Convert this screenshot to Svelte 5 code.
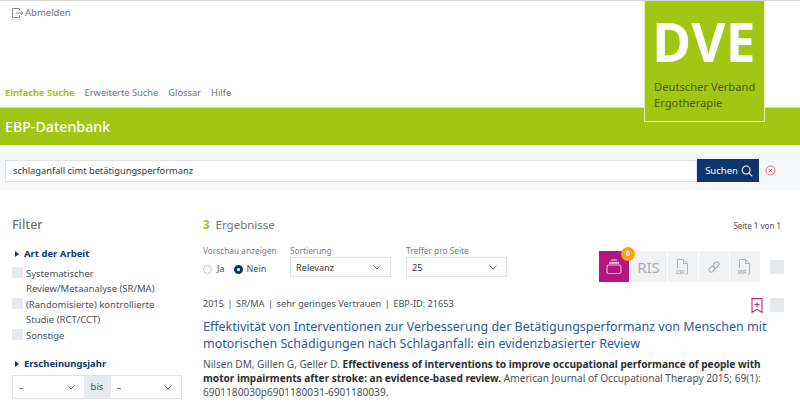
<script>
	const filters = [
		{ lines: ["Systematischer", "Review/Metaanalyse (SR/MA)"] },
		{ lines: ["(Randomisierte) kontrollierte", "Studie (RCT/CCT)"] },
		{ lines: ["Sonstige"] },
	];
	const nav = ["Erweiterte Suche", "Glossar", "Hilfe"];
	const meta = ["2015", "SR/MA", "sehr geringes Vertrauen", "EBP-ID: 21653"];
</script>

{#snippet chevron()}
	<svg class="chev" width="8" height="5" viewBox="0 0 8 5"><path d="M.5.5L4 4 7.5.5" fill="none" stroke="#5a6068" stroke-width="0.9"/></svg>
{/snippet}

{#snippet doc(label)}
	<svg width="15" height="16" viewBox="0 0 15 16" fill="none" stroke="#a9aeb5" stroke-width="0.9">
		<path d="M1.500 9V.5h6l4 4v9.500q0 1.500-1.500 1.500M7.500.5v4h4"/>
		<text x="0" y="14.500" font-size="4.500" font-weight="700" fill="#a9aeb5" stroke="none">{label}</text>
	</svg>
{/snippet}

<div class="page">
	<header>
		<a class="logout">
			<svg width="12" height="10" viewBox="0 0 12 10" fill="none" stroke="#8a8f96"><path d="M7.500 2.500V.5h-7v9h7v-2M4 5h7M9 3l2 2-2 2"/></svg>
			Abmelden
		</a>
		<nav>
			<b>Einfache Suche</b>
			{#each nav as item}<span>{item}</span>{/each}
		</nav>
		<div class="logo">
			<div class="dve">DVE</div>
			<div class="claim">Deutscher Verband<br />Ergotherapie</div>
		</div>
	</header>

	<div class="band"><h1>EBP-Datenbank</h1></div>

	<div class="search">
		<div class="field">schlaganfall cimt betätigungsperformanz</div>
		<button class="go">
			Suchen
			<svg width="12" height="12" viewBox="0 0 13 13" fill="none" stroke="#fff" stroke-width="1.1"><circle cx="5.500" cy="5.500" r="4.300"/><path d="M8.700 8.700l3.600 3.600"/></svg>
		</button>
		<svg class="clear" width="11" height="11" viewBox="0 0 12 12" fill="none" stroke="#e8606f"><circle cx="6" cy="6" r="5"/><path d="M4 4l4 4M8 4l-4 4"/></svg>
	</div>

	<div class="main">
		<aside>
			<h2>Filter</h2>
			<h3><i></i>Art der Arbeit</h3>
			{#each filters as f}
				<div class="check">
					<span class="box"></span>
					<div>{#each f.lines as l}<div>{l}</div>{/each}</div>
				</div>
			{/each}
			<h3 class="year"><i></i>Erscheinungsjahr</h3>
			<div class="range">
				<div class="cell">–{@render chevron()}</div>
				<div class="bis">bis</div>
				<div class="cell">–{@render chevron()}</div>
			</div>
		</aside>

		<section>
			<div class="head">
				<div class="count"><b>3</b>Ergebnisse</div>
				<div class="pages">Seite 1 von 1</div>
			</div>

			<div class="tools">
				<div class="opt preview">
					<label>Vorschau anzeigen</label>
					<div class="radios">
						<span class="radio"></span>Ja
						<span class="radio on"></span>Nein
					</div>
				</div>
				<div class="opt sort">
					<label>Sortierung</label>
					<div class="select">Relevanz{@render chevron()}</div>
				</div>
				<div class="opt hits">
					<label>Treffer pro Seite</label>
					<div class="select">25{@render chevron()}</div>
				</div>
				<div class="actions">
					<div class="act pink">
						<span class="badge">0</span>
						<svg width="16" height="15" viewBox="0 0 16 15" fill="none" stroke="#f0bcd9" stroke-width="1.100"><rect x="1" y="6" width="14" height="8.500" rx="1.800"/><path d="M3 3.800h10" stroke-width="2"/><path d="M5 1h6" stroke-width="1.200"/></svg>
					</div>
					<div class="act ris">RIS</div>
					<div class="act">{@render doc("CSV")}</div>
					<div class="act">
						<svg width="12" height="12" viewBox="0 0 14 14" fill="none" stroke="#a9aeb5" stroke-width="1.300"><rect x="7" y="0.800" width="5" height="7.500" rx="2.500" transform="rotate(40 9.500 4.500)"/><rect x="2" y="5.800" width="5" height="7.500" rx="2.500" transform="rotate(40 4.500 9.500)"/></svg>
					</div>
					<div class="act">{@render doc("PDF")}</div>
					<span class="square"></span>
				</div>
			</div>

			<div class="meta">
				<span>
					{#each meta as m, i}{#if i}<span class="sep">|</span>{/if}{m}{/each}
				</span>
				<div class="marks">
					<svg width="12" height="15" viewBox="0 0 12 15" fill="none" stroke="#c8247f" stroke-width="1.100"><path d="M1 .6h10v13.800l-5-3-5 3zM6 4v5M3.500 6.500h5"/></svg>
					<span class="square"></span>
				</div>
			</div>

			<h4>Effektivität von Interventionen zur Verbesserung der Betätigungsperformanz von Menschen mit motorischen Schädigungen nach Schlaganfall: ein evidenzbasierter Review</h4>
			<p>Nilsen DM, Gillen G, Geller D. <b>Effectiveness of interventions to improve occupational performance of people with motor impairments after stroke: an evidence-based review.</b> American Journal of Occupational Therapy 2015; 69(1): 6901180030p6901180031-6901180039.</p>
		</section>
	</div>
</div>

<style>
	:global(body) {
		margin: 0;
		background: #fff;
		overflow: hidden;
	}
	.page {
		width: 800px;
		height: 406px;
		overflow: hidden;
		font-family: "Noto Sans", sans-serif;
		font-size: 9.5px;
		color: #4b5157;
	}
	header {
		position: relative;
		height: 106px;
		border-top: 1px solid #d5d5d5;
		border-bottom: 1px solid #d5d5d5;
	}
	.logout {
		position: absolute;
		left: 12px;
		top: 5px;
		display: flex;
		align-items: center;
		gap: 1px;
		color: #6e747b;
	}
	nav {
		position: absolute;
		left: 5px;
		top: 85px;
		display: flex;
		gap: 10px;
		font-size: 9.3px;
		color: #6e747b;
	}
	nav b {
		color: #a2c614;
	}
	.logo {
		position: absolute;
		left: 645px;
		top: 0;
		z-index: 2;
		width: 119px;
		height: 120px;
		background: #a2c614;
		box-shadow: 0 0 0 1px #e4eebb;
		clip-path: inset(0 -1px -1px -1px);
	}
	.dve {
		margin: 11px 0 0 7px;
		font-family: "Open Sans", sans-serif;
		font-size: 53px;
		font-weight: 700;
		line-height: 60px;
		color: #fff;
	}
	.claim {
		margin: 7px 0 0 9px;
		font-size: 11.2px;
		line-height: 15.5px;
		color: #4a5a10;
	}
	.band {
		height: 37px;
		background: #a2c614;
	}
	h1 {
		margin: 0;
		padding: 10px 0 0 5px;
		font-size: 14.200px;
		font-weight: 500;
		line-height: 18px;
		color: #fff;
	}
	.search {
		display: flex;
		align-items: center;
		height: 45px;
		padding: 6px 0 0 5px;
		box-sizing: border-box;
		background: #f5f7f9;
	}
	.field {
		width: 692px;
		height: 22px;
		padding-left: 7px;
		box-sizing: border-box;
		background: #fff;
		border: 1px solid #e1e3e6;
		font-size: 9.3px;
		line-height: 20px;
		color: #33383d;
	}
	.go {
		display: flex;
		align-items: center;
		justify-content: center;
		gap: 3px;
		width: 62px;
		height: 23px;
		padding: 0 0 0 2px;
		border: 0;
		background: #0f3570;
		color: #fff;
		font: inherit;
	}
	.clear {
		margin-left: 6px;
	}
	.main {
		display: flex;
		padding: 27px 0 0 12px;
	}
	aside {
		width: 171px;
		flex: none;
	}
	h2 {
		margin: 0 0 14px;
		font-size: 12.500px;
		font-weight: 500;
		line-height: 16px;
		color: #6e747b;
	}
	h3 {
		display: flex;
		align-items: center;
		margin: 0 0 6px;
		font-size: 9.5px;
		font-weight: 700;
		line-height: 13px;
		color: #0f3570;
	}
	h3 i {
		width: 0;
		height: 0;
		margin: 0 5px 0 3px;
		border-left: 4px solid #0f3570;
		border-top: 3.500px solid transparent;
		border-bottom: 3.500px solid transparent;
	}
	.year {
		margin: 14px 0 5px;
	}
	.check {
		display: flex;
		gap: 4px;
		margin-bottom: 1px;
		line-height: 15px;
	}
	.box {
		flex: none;
		width: 11px;
		height: 11px;
		margin-top: 1px;
		background: #e8ebee;
	}
	.check > div {
		margin-left: -1px;
	}
	.range {
		display: flex;
		height: 24px;
		width: 170px;
		box-sizing: border-box;
		border: 1px solid #e1e3e6;
		align-items: stretch;
	}
	.cell {
		flex: 1;
		display: flex;
		align-items: center;
		justify-content: space-between;
		padding: 0 9px 0 6px;
	}
	.bis {
		width: 27px;
		text-align: center;
		line-height: 22px;
		background: #e8ebee;
		color: #4b5157;
	}
	section {
		margin-left: 20px;
		width: 585px;
	}
	.head {
		display: flex;
		justify-content: space-between;
		align-items: center;
		height: 16px;
		padding-right: 7px;
	}
	.count {
		padding-bottom: 2px;
		font-size: 11.500px;
		color: #6e747b;
	}
	.count b {
		color: #a2c614;
		margin-right: 6px;
	}
	.pages {
		font-size: 8px;
	}
	.tools {
		display: flex;
		margin-top: 12px;
		height: 52px;
	}
	.opt label {
		display: block;
		font-size: 8.300px;
		line-height: 12px;
		color: #7a8087;
	}
	.preview {
		width: 87px;
	}
	.sort {
		width: 116px;
	}
	.hits {
		width: 101px;
	}
	.radios {
		display: flex;
		align-items: center;
		margin-top: 5px;
		line-height: 14px;
		font-size: 9px;
	}
	.radio {
		width: 7px;
		height: 7px;
		margin-right: 5px;
		border: 1px solid #c4c8cd;
		border-radius: 50%;
	}
	.radio.on {
		width: 3px;
		height: 3px;
		margin: 0 4px 0 9px;
		border: 3px solid #0f3570;
	}
	.select {
		display: flex;
		align-items: center;
		justify-content: space-between;
		width: 101px;
		height: 20px;
		padding: 0 9px 0 5px;
		box-sizing: border-box;
		border: 1px solid #e1e3e6;
		font-size: 9.2px;
		color: #33383d;
	}
	.actions {
		display: flex;
		gap: 1px;
		margin: 6px 0 0 92px;
	}
	.act {
		position: relative;
		display: flex;
		align-items: center;
		justify-content: center;
		width: 30px;
		height: 31px;
		background: #f0f2f4;
	}
	.pink {
		background: #b5157f;
	}
	.ris {
		width: 37px;
		font-size: 15px;
		font-weight: 400;
		color: #a9aeb5;
	}
	.badge {
		position: absolute;
		right: -6px;
		top: -4px;
		z-index: 1;
		width: 14px;
		height: 14px;
		border-radius: 50%;
		background: #f5a414;
		color: #fff;
		font-size: 7px;
		font-weight: 700;
		line-height: 14px;
		text-align: center;
	}
	.square {
		width: 14px;
		height: 14px;
		background: #e6e9ec;
	}
	.actions .square {
		margin: 9px 0 0 9px;
	}
	.meta {
		display: flex;
		justify-content: space-between;
		align-items: flex-start;
		height: 21px;
		padding-right: 4px;
		font-size: 9.2px;
		line-height: 13px;
	}
	.sep {
		margin: 0 3.500px;
	}
	.marks {
		display: flex;
		gap: 7px;
		align-items: flex-start;
		margin-top: 1px;
	}
	h4 {
		margin: 0;
		font-size: 12.500px;
		font-weight: 400;
		line-height: 17px;
		color: #2c5aa0;
		padding-right: 10px;
	}
	p {
		margin: 5px 0 0;
		font-size: 10.100px;
		line-height: 14px;
		padding-right: 8px;
		color: #4b5157;
	}
	p b {
		color: #2b2f33;
	}
</style>
